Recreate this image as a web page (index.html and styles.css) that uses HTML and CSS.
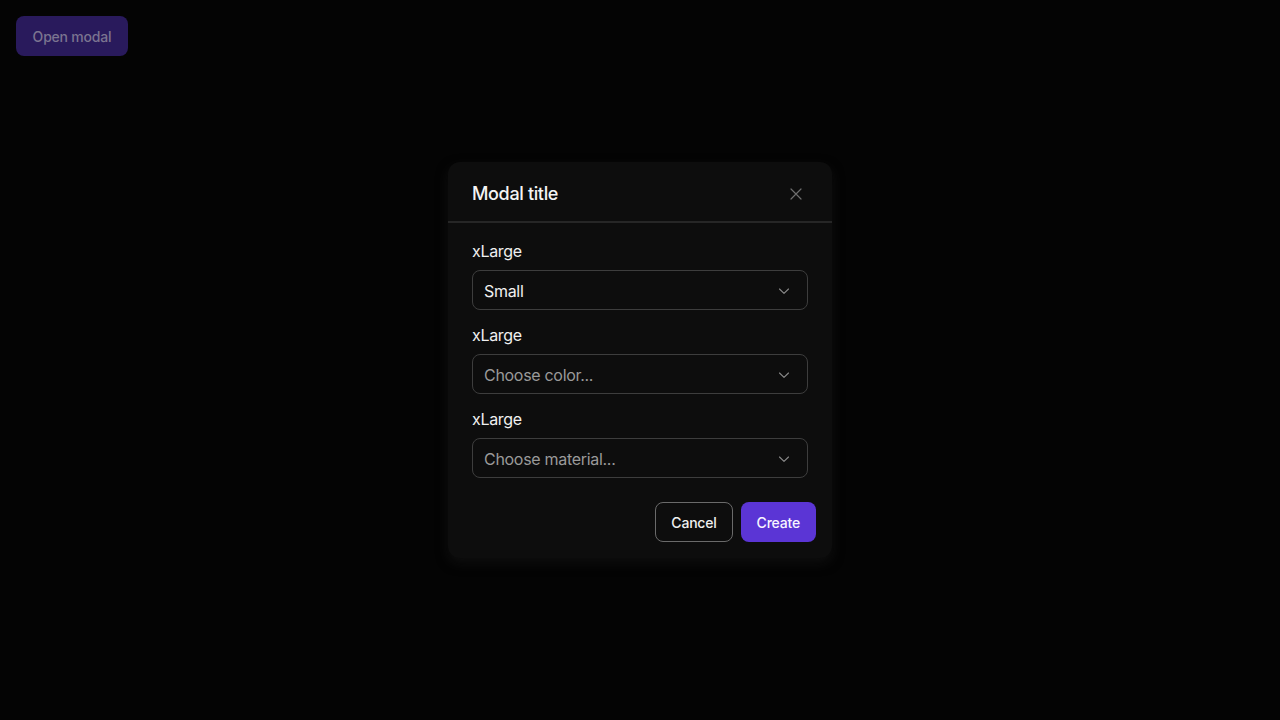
FILE: index.html
```html
<!DOCTYPE html>
<html>
<head>
<meta charset="utf-8">
<link rel="stylesheet" href="styles.css">
</head>
<body>
<div class="page">
  <button class="open-btn">Open modal</button>
  <div class="overlay">
    <div class="modal">
      <div class="modal-header">
        <h2 class="modal-title">Modal title</h2>
        <button class="close-btn" aria-label="Close">
          <svg width="12" height="12" viewBox="0 0 12 12"><path d="M1 1L11 11M11 1L1 11" stroke="#6e6e6e" stroke-width="1.2" stroke-linecap="round"/></svg>
        </button>
      </div>
      <div class="modal-body">
        <div class="field">
          <label class="field-label">xLarge</label>
          <div class="select"><span class="select-value">Small</span><svg class="chev" width="12" height="8" viewBox="0 0 12 8"><path d="M1.5 2L6 6.3L10.5 2" fill="none" stroke="#8a8a8a" stroke-width="1.1" stroke-linecap="round" stroke-linejoin="round"/></svg></div>
        </div>
        <div class="field">
          <label class="field-label">xLarge</label>
          <div class="select"><span class="select-placeholder">Choose color...</span><svg class="chev" width="12" height="8" viewBox="0 0 12 8"><path d="M1.5 2L6 6.3L10.5 2" fill="none" stroke="#8a8a8a" stroke-width="1.1" stroke-linecap="round" stroke-linejoin="round"/></svg></div>
        </div>
        <div class="field">
          <label class="field-label">xLarge</label>
          <div class="select"><span class="select-placeholder">Choose material...</span><svg class="chev" width="12" height="8" viewBox="0 0 12 8"><path d="M1.5 2L6 6.3L10.5 2" fill="none" stroke="#8a8a8a" stroke-width="1.1" stroke-linecap="round" stroke-linejoin="round"/></svg></div>
        </div>
      </div>
      <div class="modal-footer">
        <button class="btn btn-outline">Cancel</button>
        <button class="btn btn-primary">Create</button>
      </div>
    </div>
  </div>
</div>
</body>
</html>
```
FILE: styles.css
```css
* { box-sizing: border-box; }
html, body { margin: 0; padding: 0; }
body {
  background: #040404;
  font-family: Inter, "Noto Sans", sans-serif;
  width: 1280px;
  height: 720px;
  overflow: hidden;
}
.page {
  position: relative;
  width: 1280px;
  height: 720px;
  padding: 16px;
}
.open-btn {
  height: 40px;
  width: 112px;
  border: none;
  border-radius: 8px;
  background: #291a5c;
  color: #7b7490;
  font-family: Inter, sans-serif;
  font-size: 14px;
  font-weight: 500;
  letter-spacing: -0.2px;
}
.overlay {
  position: absolute;
  inset: 0;
  display: flex;
  justify-content: center;
  align-items: flex-start;
  padding-top: 162px;
}
.modal {
  width: 384px;
  background: #0d0d0d;
  border-radius: 12px;
  box-shadow: 0 5px 12px rgba(18,18,18,0.7);
}
.modal-header {
  height: 61px;
  display: flex;
  align-items: center;
  justify-content: space-between;
  padding: 0 24px;
  border-bottom: 2px solid #262626;
}
.modal-title {
  margin: 0;
  color: #f4f4f4;
  font-size: 18px;
  font-weight: 500;
  letter-spacing: -0.35px;
  line-height: 28px;
  padding-top: 4px;
}
.close-btn {
  background: none;
  border: none;
  padding: 0;
  width: 24px;
  height: 24px;
  display: flex;
  align-items: center;
  justify-content: center;
  margin-top: 4px;
}
.modal-body {
  padding: 15px 24px 8px;
  display: flex;
  flex-direction: column;
  gap: 12px;
}
.field {
  display: flex;
  flex-direction: column;
  gap: 8px;
}
.field-label {
  color: #f0f0f0;
  font-size: 16px;
  line-height: 24px;
  letter-spacing: -0.3px;
  padding-top: 1px;
  margin-bottom: -1px;
}
.select {
  height: 40px;
  border: 1px solid #3d3d3d;
  border-radius: 8px;
  display: flex;
  align-items: center;
  justify-content: space-between;
  padding: 1px 17px 0 11px;
  font-size: 16px;
  letter-spacing: -0.3px;
}
.select-value { color: #f0f0f0; }
.select-placeholder { color: #9a9a9a; }
.chev { display: block; }
.modal-footer {
  display: flex;
  justify-content: flex-end;
  gap: 8px;
  padding: 16px;
}
.btn {
  height: 40px;
  border-radius: 8px;
  font-family: Inter, sans-serif;
  font-size: 14px;
  font-weight: 500;
  letter-spacing: -0.2px;
  padding: 0 15px;
}
.btn-outline {
  background: transparent;
  border: 1px solid #6a6a6a;
  color: #f0f0f0;
}
.btn-primary {
  background: #5b35d5;
  border: none;
  color: #f7f5ff;
  padding: 0 16px;
}
```
